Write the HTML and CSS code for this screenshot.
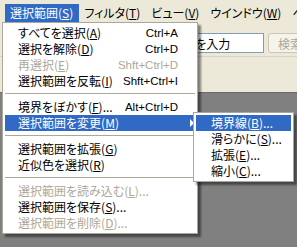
FILE: index.html
```html
<!DOCTYPE html>
<html lang="ja">
<head>
    <meta charset="UTF-8">
    <title>選択範囲メニュー</title>
    <link rel="stylesheet" href="styles.css">
</head>
<body>
    <div class="app">
        <div class="menubar">
            <span class="mb-item active">選択範囲(<u>S</u>)</span>
            <span class="mb-item">フィルタ(<u>T</u>)</span>
            <span class="mb-item">ビュー(<u>V</u>)</span>
            <span class="mb-item">ウインドウ(<u>W</u>)</span>
            <span class="mb-item">ヘルプ(<u>H</u>)</span>
        </div>
        <div class="toolbar">
            <input class="search" type="text" value="キーワードを入力">
            <button class="search-btn" disabled>検索</button>
        </div>
        <div class="options"></div>
        <div class="workspace"></div>
    </div>

    <div class="menu main-menu">
        <div class="row"><span>すべてを選択(<u>A</u>)</span><span class="key">Ctrl+A</span></div>
        <div class="row"><span>選択を解除(<u>D</u>)</span><span class="key">Ctrl+D</span></div>
        <div class="row off"><span>再選択(<u>E</u>)</span><span class="key">Shft+Ctrl+D</span></div>
        <div class="row"><span>選択範囲を反転(<u>I</u>)</span><span class="key">Shft+Ctrl+I</span></div>
        <div class="sep"></div>
        <div class="row"><span>境界をぼかす(<u>F</u>)...</span><span class="key">Alt+Ctrl+D</span></div>
        <div class="row hot"><span>選択範囲を変更(<u>M</u>)</span><span class="key"></span><span class="arrow"></span></div>
        <div class="sep"></div>
        <div class="row"><span>選択範囲を拡張(<u>G</u>)</span></div>
        <div class="row"><span>近似色を選択(<u>R</u>)</span></div>
        <div class="sep"></div>
        <div class="row off"><span>選択範囲を読み込む(<u>L</u>)...</span></div>
        <div class="row"><span>選択範囲を保存(<u>S</u>)...</span></div>
        <div class="row off"><span>選択範囲を削除(<u>D</u>)...</span></div>
    </div>

    <div class="menu sub-menu">
        <div class="row hot"><span>境界線(<u>B</u>)...</span></div>
        <div class="row"><span>滑らかに(<u>S</u>)...</span></div>
        <div class="row"><span>拡張(<u>E</u>)...</span></div>
        <div class="row"><span>縮小(<u>C</u>)...</span></div>
    </div>
</body>
</html>
```

FILE: styles.css
```css
body {
    margin: 0;
    width: 297px;
    height: 247px;
    overflow: hidden;
    font-family: "Noto Sans CJK JP", sans-serif;
    font-size: 12px;
    font-feature-settings: "palt";
    color: #000;
    background-color: #808080;
}

u {
    text-decoration: underline;
    text-underline-offset: 1px;
}

.app {
    display: flex;
    flex-direction: column;
    height: 247px;
}

.menubar {
    display: flex;
    height: 24px;
    padding: 4px 0 0 5px;
    box-sizing: border-box;
    white-space: nowrap;
    overflow: hidden;
    background-color: #ece9d8;
}

.mb-item {
    padding: 0 6px 0 5px;
    height: 18px;
    line-height: 18px;
}

.mb-item.active {
    background-color: #316ac5;
    color: #fff;
}

.toolbar {
    display: flex;
    justify-content: flex-end;
    gap: 4px;
    height: 32px;
    padding-top: 9px;
    box-sizing: border-box;
    margin-right: -12px;
    background-color: #ece9d8;
}

.search {
    width: 128px;
    height: 20px;
    box-sizing: border-box;
    border: 1px solid #7f9db9;
    padding: 0 3px;
    font: inherit;
    font-feature-settings: "palt";
    background-color: #fff;
}

.search-btn {
    width: 41px;
    height: 20px;
    padding: 0 0 0 9px;
    text-align: left;
    border: 1px solid #c9c7ba;
    border-radius: 3px;
    background-color: #f5f4ea;
    color: #aca899;
    font: inherit;
}

.options {
    height: 35px;
    border-top: 1px solid #d6d3c2;
    background-color: #ece9d8;
}

.workspace {
    flex: 1;
    border-top: 1px solid #6a6a6a;
    background-color: #808080;
}

.menu {
    position: absolute;
    box-sizing: border-box;
    padding: 2px;
    border: 1px solid #aca899;
    background-color: #fff;
    box-shadow: 3px 3px 2px rgba(0, 0, 0, 0.45);
    white-space: nowrap;
}

.main-menu {
    left: 2px;
    top: 22px;
    width: 196px;
}

.sub-menu {
    left: 193px;
    top: 112px;
    width: 101px;
}

.row {
    display: flex;
    align-items: center;
    height: 16px;
    line-height: 16px;
    padding-left: 13px;
}

.main-menu .row {
    padding-right: 17px;
}

.sub-menu .row {
    padding-left: 15px;
}

.row span:first-child {
    flex: 1;
}

.row.off {
    color: #aca899;
}

.row.hot {
    background-color: #316ac5;
    color: #fff;
}

.main-menu .row.hot {
    padding-right: 1px;
}

.key {
    font-family: "Liberation Sans", sans-serif;
    font-size: 11.5px;
}

.arrow {
    margin-left: 12px;
    width: 0;
    height: 0;
    border-left: 4px solid #fff;
    border-top: 4px solid transparent;
    border-bottom: 4px solid transparent;
}

.sep {
    height: 1px;
    margin: 4px 0 5px;
    background-color: #aca899;
}
```
